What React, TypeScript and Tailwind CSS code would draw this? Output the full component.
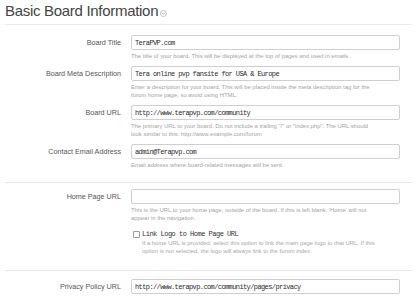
import React from "react";

const labelCls =
  "w-[121px] shrink-0 text-right text-[7.2px] leading-[15px] text-[#555] font-['Liberation_Sans',Arial,sans-serif]";
const inputCls =
  "w-[269px] h-[15px] rounded-[2px] border border-[#cfcfcf] bg-white pl-[3px] text-[7px] leading-[13px] tracking-[-0.6px] text-[#2a2a2a] font-['Liberation_Mono',monospace] outline-none";
const helpCls =
  "mt-[2px] text-[5.9px] leading-[8px] text-[#a3a3a3] font-['Liberation_Sans',Arial,sans-serif] whitespace-nowrap";

const Row = ({
  label,
  value,
  help,
  children,
}: {
  label: string;
  value: string;
  help: string[];
  children?: React.ReactNode;
}) => (
  <div className="flex gap-[10px]">
    <div className={labelCls}>{label}</div>
    <div className="flex flex-col">
      <input className={inputCls} defaultValue={value} readOnly />
      <div className={helpCls}>
        {help.map((line, i) => (
          <div key={i}>{line}</div>
        ))}
      </div>
      {children}
    </div>
  </div>
);

const App = () => {
  return (
    <div className="w-[417px] h-[300px] overflow-hidden bg-white">
      <div className="mx-[5px] h-[25px] border-b border-[#e6eced] flex items-start">
        <h2 className="pt-[1px] text-[15px] leading-[20px] tracking-[-0.3px] text-[#444] font-['Liberation_Sans',Arial,sans-serif]">
          Basic Board Information
        </h2>
        <svg
          className="ml-[2px] mt-[10px]"
          width="7"
          height="7"
          viewBox="0 0 7 7"
        >
          <circle cx="3.5" cy="3.5" r="3" fill="none" stroke="#b5b5b5" strokeWidth="0.8" />
          <path d="M2 2.8 L3.5 4.3 L5 2.8" fill="none" stroke="#9a9a9a" strokeWidth="0.8" />
        </svg>
      </div>

      <div className="pt-[10px] pb-[13px] mx-[5px] border-b border-[#e8e8e8]">
        <div className="-ml-[5px] flex flex-col gap-[6px]">
          <Row
            label="Board Title"
            value="TeraPVP.com"
            help={[
              "The title of your board. This will be displayed at the top of pages and used in emails.",
            ]}
          />
          <Row
            label="Board Meta Description"
            value="Tera online pvp fansite for USA & Europe"
            help={[
              "Enter a description for your board. This will be placed inside the meta description tag for the",
              "forum home page, so avoid using HTML.",
            ]}
          />
          <Row
            label="Board URL"
            value="http://www.terapvp.com/community"
            help={[
              'The primary URL to your board. Do not include a trailing "/" or "index.php". The URL should',
              "look similar to this: http://www.example.com/forum",
            ]}
          />
          <Row
            label="Contact Email Address"
            value="admin@Terapvp.com"
            help={["Email address where board-related messages will be sent."]}
          />
        </div>
      </div>

      <div className="pt-[6px] pb-[15px] mx-[5px] border-b border-[#e8e8e8]">
        <div className="-ml-[5px]">
          <Row
            label="Home Page URL"
            value=""
            help={[
              "This is the URL to your home page, outside of the board. If this is left blank, 'Home' will not",
              "appear in the navigation.",
            ]}
          >
            <label className="mt-[7px] flex items-center gap-[2px] pl-[2px] h-[10px]">
              <span className="w-[7px] h-[7px] border border-[#9a9a9a] bg-white rounded-[1px]" />
              <span className="text-[7px] leading-[10px] tracking-[-0.5px] text-[#333] font-['Liberation_Mono',monospace]">
                Link Logo to Home Page URL
              </span>
            </label>
            <div className="pl-[11px] text-[5.9px] leading-[8px] text-[#a8a8a8] font-['Liberation_Sans',Arial,sans-serif] whitespace-nowrap">
              <div>
                If a home URL is provided, select this option to link the main page logo to that URL. If this
              </div>
              <div>option is not selected, the logo will always link to the forum index.</div>
            </div>
          </Row>
        </div>
      </div>

      <div className="pt-[8px]">
        <div className="flex gap-[10px]">
          <div className={labelCls}>Privacy Policy URL</div>
          <input
            className={inputCls}
            defaultValue="http://www.terapvp.com/community/pages/privacy"
            readOnly
          />
        </div>
      </div>
    </div>
  );
};

export default App;
